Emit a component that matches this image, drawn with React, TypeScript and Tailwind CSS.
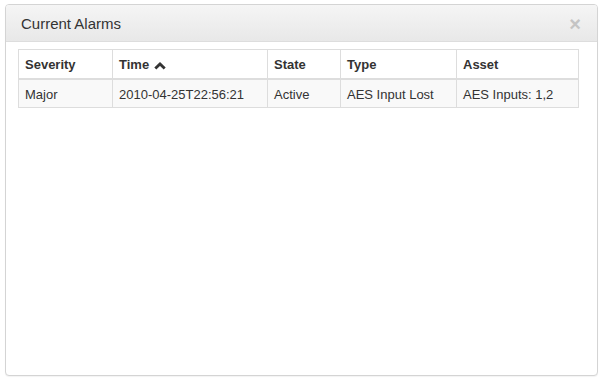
import React from "react";

const cols = [
  { label: "Severity", w: 94 },
  { label: "Time", w: 155, sort: true },
  { label: "State", w: 73 },
  { label: "Type", w: 116 },
  { label: "Asset", w: 122 },
];

const row = ["Major", "2010-04-25T22:56:21", "Active", "AES Input Lost", "AES Inputs: 1,2"];

export default function App() {
  return (
    <div
      className="w-[601px] h-[379px] bg-white pt-[4px] pl-[5px]"
      style={{ fontFamily: '"Liberation Sans", Arial, sans-serif' }}
    >
      <div className="w-[593px] h-[372px] border border-[#d4d4d4] rounded-[4px] bg-white shadow-[0_1px_1px_rgba(0,0,0,0.05)] flex flex-col overflow-hidden">
        <div className="h-[37px] shrink-0 flex items-center justify-between pl-[15px] pr-[16px] border-b border-[#dddddd] bg-gradient-to-b from-[#f5f5f5] to-[#e8e8e8]">
          <span className="text-[15px] text-[#333333] leading-none mt-[1px]">Current Alarms</span>
          <span className="text-[20px] font-bold text-[#c4c4c4] leading-none mt-[1px]">×</span>
        </div>
        <div className="pt-[7px] pl-[12px]">
          <table className="border-collapse w-[560px] text-[13px] text-[#333333] table-fixed">
            <thead>
              <tr>
                {cols.map((c) => (
                  <th
                    key={c.label}
                    style={{ width: c.w }}
                    className="border border-[#dddddd] border-b-2 text-left font-bold px-[6px] pt-[6px] pb-[4px] leading-[18px] bg-white"
                  >
                    <span className="inline-flex items-center gap-[5px]">
                      {c.label}
                      {c.sort && (
                        <svg width="12" height="9" viewBox="0 0 12 9">
                          <path d="M1.3 7.6 L6 2.9 L10.7 7.6" fill="none" stroke="#333" strokeWidth="2.8" />
                        </svg>
                      )}
                    </span>
                  </th>
                ))}
              </tr>
            </thead>
            <tbody>
              <tr className="bg-[#f9f9f9]">
                {row.map((v, i) => (
                  <td
                    key={i}
                    className="border border-[#dddddd] px-[6px] pt-[6px] pb-[3px] leading-[18px]"
                  >
                    {v}
                  </td>
                ))}
              </tr>
            </tbody>
          </table>
        </div>
      </div>
    </div>
  );
}
